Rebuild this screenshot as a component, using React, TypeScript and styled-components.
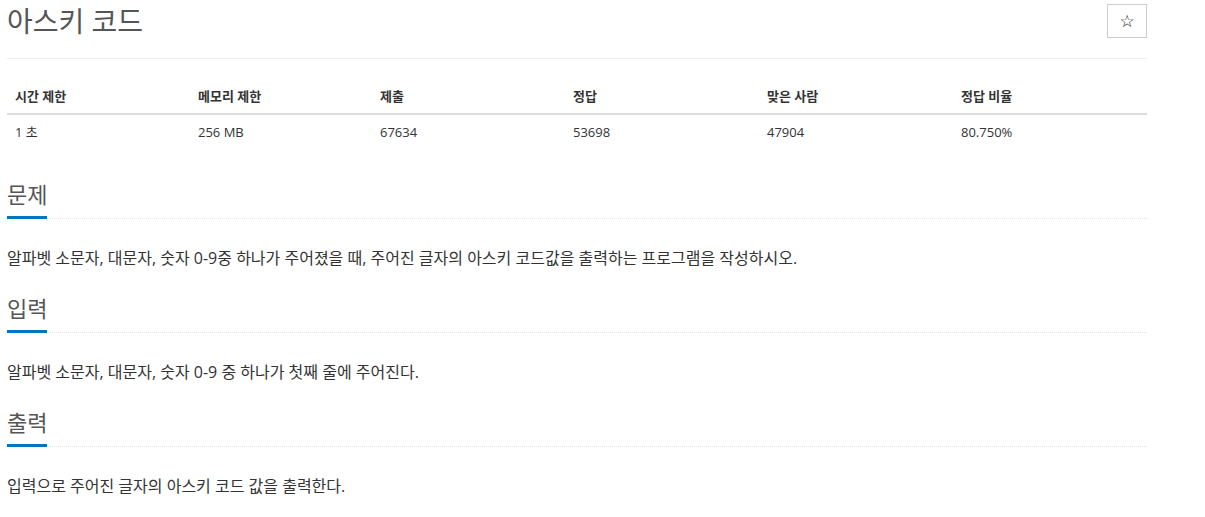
import React from "react";
import styled, { createGlobalStyle } from "styled-components";

const GlobalStyle = createGlobalStyle`
  body {
    margin: 0;
    background: #fff;
    font-family: "Open Sans", "Noto Sans CJK KR", sans-serif;
    color: #333;
  }
`;

const Page = styled.div`
  width: 1140px;
  padding: 0 7px;
`;

const Header = styled.div`
  display: flex;
  justify-content: space-between;
  align-items: center;
  padding: 4px 0 20px;
  border-bottom: 1px solid #eee;
`;

const Title = styled.h1`
  margin: 0;
  font-size: 28px;
  font-weight: 400;
  line-height: 34px;
  color: #555;
`;

const StarButton = styled.button`
  width: 40px;
  height: 34px;
  border: 1px solid #ccc;
  background: #fff;
  font-size: 17px;
  color: #222;
  padding: 0;
  display: flex;
  align-items: center;
  justify-content: center;
  font-family: "DejaVu Sans", sans-serif;
`;

const Table = styled.table`
  width: 100%;
  table-layout: fixed;
  margin: 21px 0 31px;
  border-collapse: collapse;
  font-size: 13px;
`;

const Th = styled.th<{ $w: number }>`
  box-sizing: border-box;
  width: ${(p) => p.$w}px;
  text-align: left;
  font-weight: 700;
  padding: 8px;
  line-height: 17px;
  border-bottom: 2px solid #ddd;
  color: #333;
`;

const Td = styled.td`
  padding: 8px;
  line-height: 18px;
  color: #333;
`;

const Section = styled.section`
  margin-top: 24px;
`;

const Headline = styled.div`
  border-bottom: 1px dotted #e5e5e5;
`;

const SectionTitle = styled.h2`
  display: inline-block;
  margin: 0 0 -1px;
  font-size: 22px;
  font-weight: 400;
  line-height: 28px;
  padding-bottom: 8px;
  color: #555;
  border-bottom: 3px solid #0076c0;
`;

const Text = styled.p`
  margin: 27px 0 0;
  font-size: 16px;
  line-height: 24px;
  color: #333;
`;

const columns = [
  { label: "시간 제한", value: "1 초", w: 183 },
  { label: "메모리 제한", value: "256 MB", w: 182 },
  { label: "제출", value: "67634", w: 193 },
  { label: "정답", value: "53698", w: 194 },
  { label: "맞은 사람", value: "47904", w: 194 },
  { label: "정답 비율", value: "80.750%", w: 194 },
];

const sections = [
  {
    title: "문제",
    body: "알파벳 소문자, 대문자, 숫자 0-9중 하나가 주어졌을 때, 주어진 글자의 아스키 코드값을 출력하는 프로그램을 작성하시오.",
  },
  {
    title: "입력",
    body: "알파벳 소문자, 대문자, 숫자 0-9 중 하나가 첫째 줄에 주어진다.",
  },
  {
    title: "출력",
    body: "입력으로 주어진 글자의 아스키 코드 값을 출력한다.",
  },
];

const App: React.FC = () => {
  return (
    <Page>
      <GlobalStyle />
      <Header>
        <Title>아스키 코드</Title>
        <StarButton>☆</StarButton>
      </Header>

      <Table>
        <thead>
          <tr>
            {columns.map((c) => (
              <Th key={c.label} $w={c.w}>
                {c.label}
              </Th>
            ))}
          </tr>
        </thead>
        <tbody>
          <tr>
            {columns.map((c) => (
              <Td key={c.label}>{c.value}</Td>
            ))}
          </tr>
        </tbody>
      </Table>

      {sections.map((s) => (
        <Section key={s.title}>
          <Headline>
            <SectionTitle>{s.title}</SectionTitle>
          </Headline>
          <Text>{s.body}</Text>
        </Section>
      ))}
    </Page>
  );
};

export default App;
